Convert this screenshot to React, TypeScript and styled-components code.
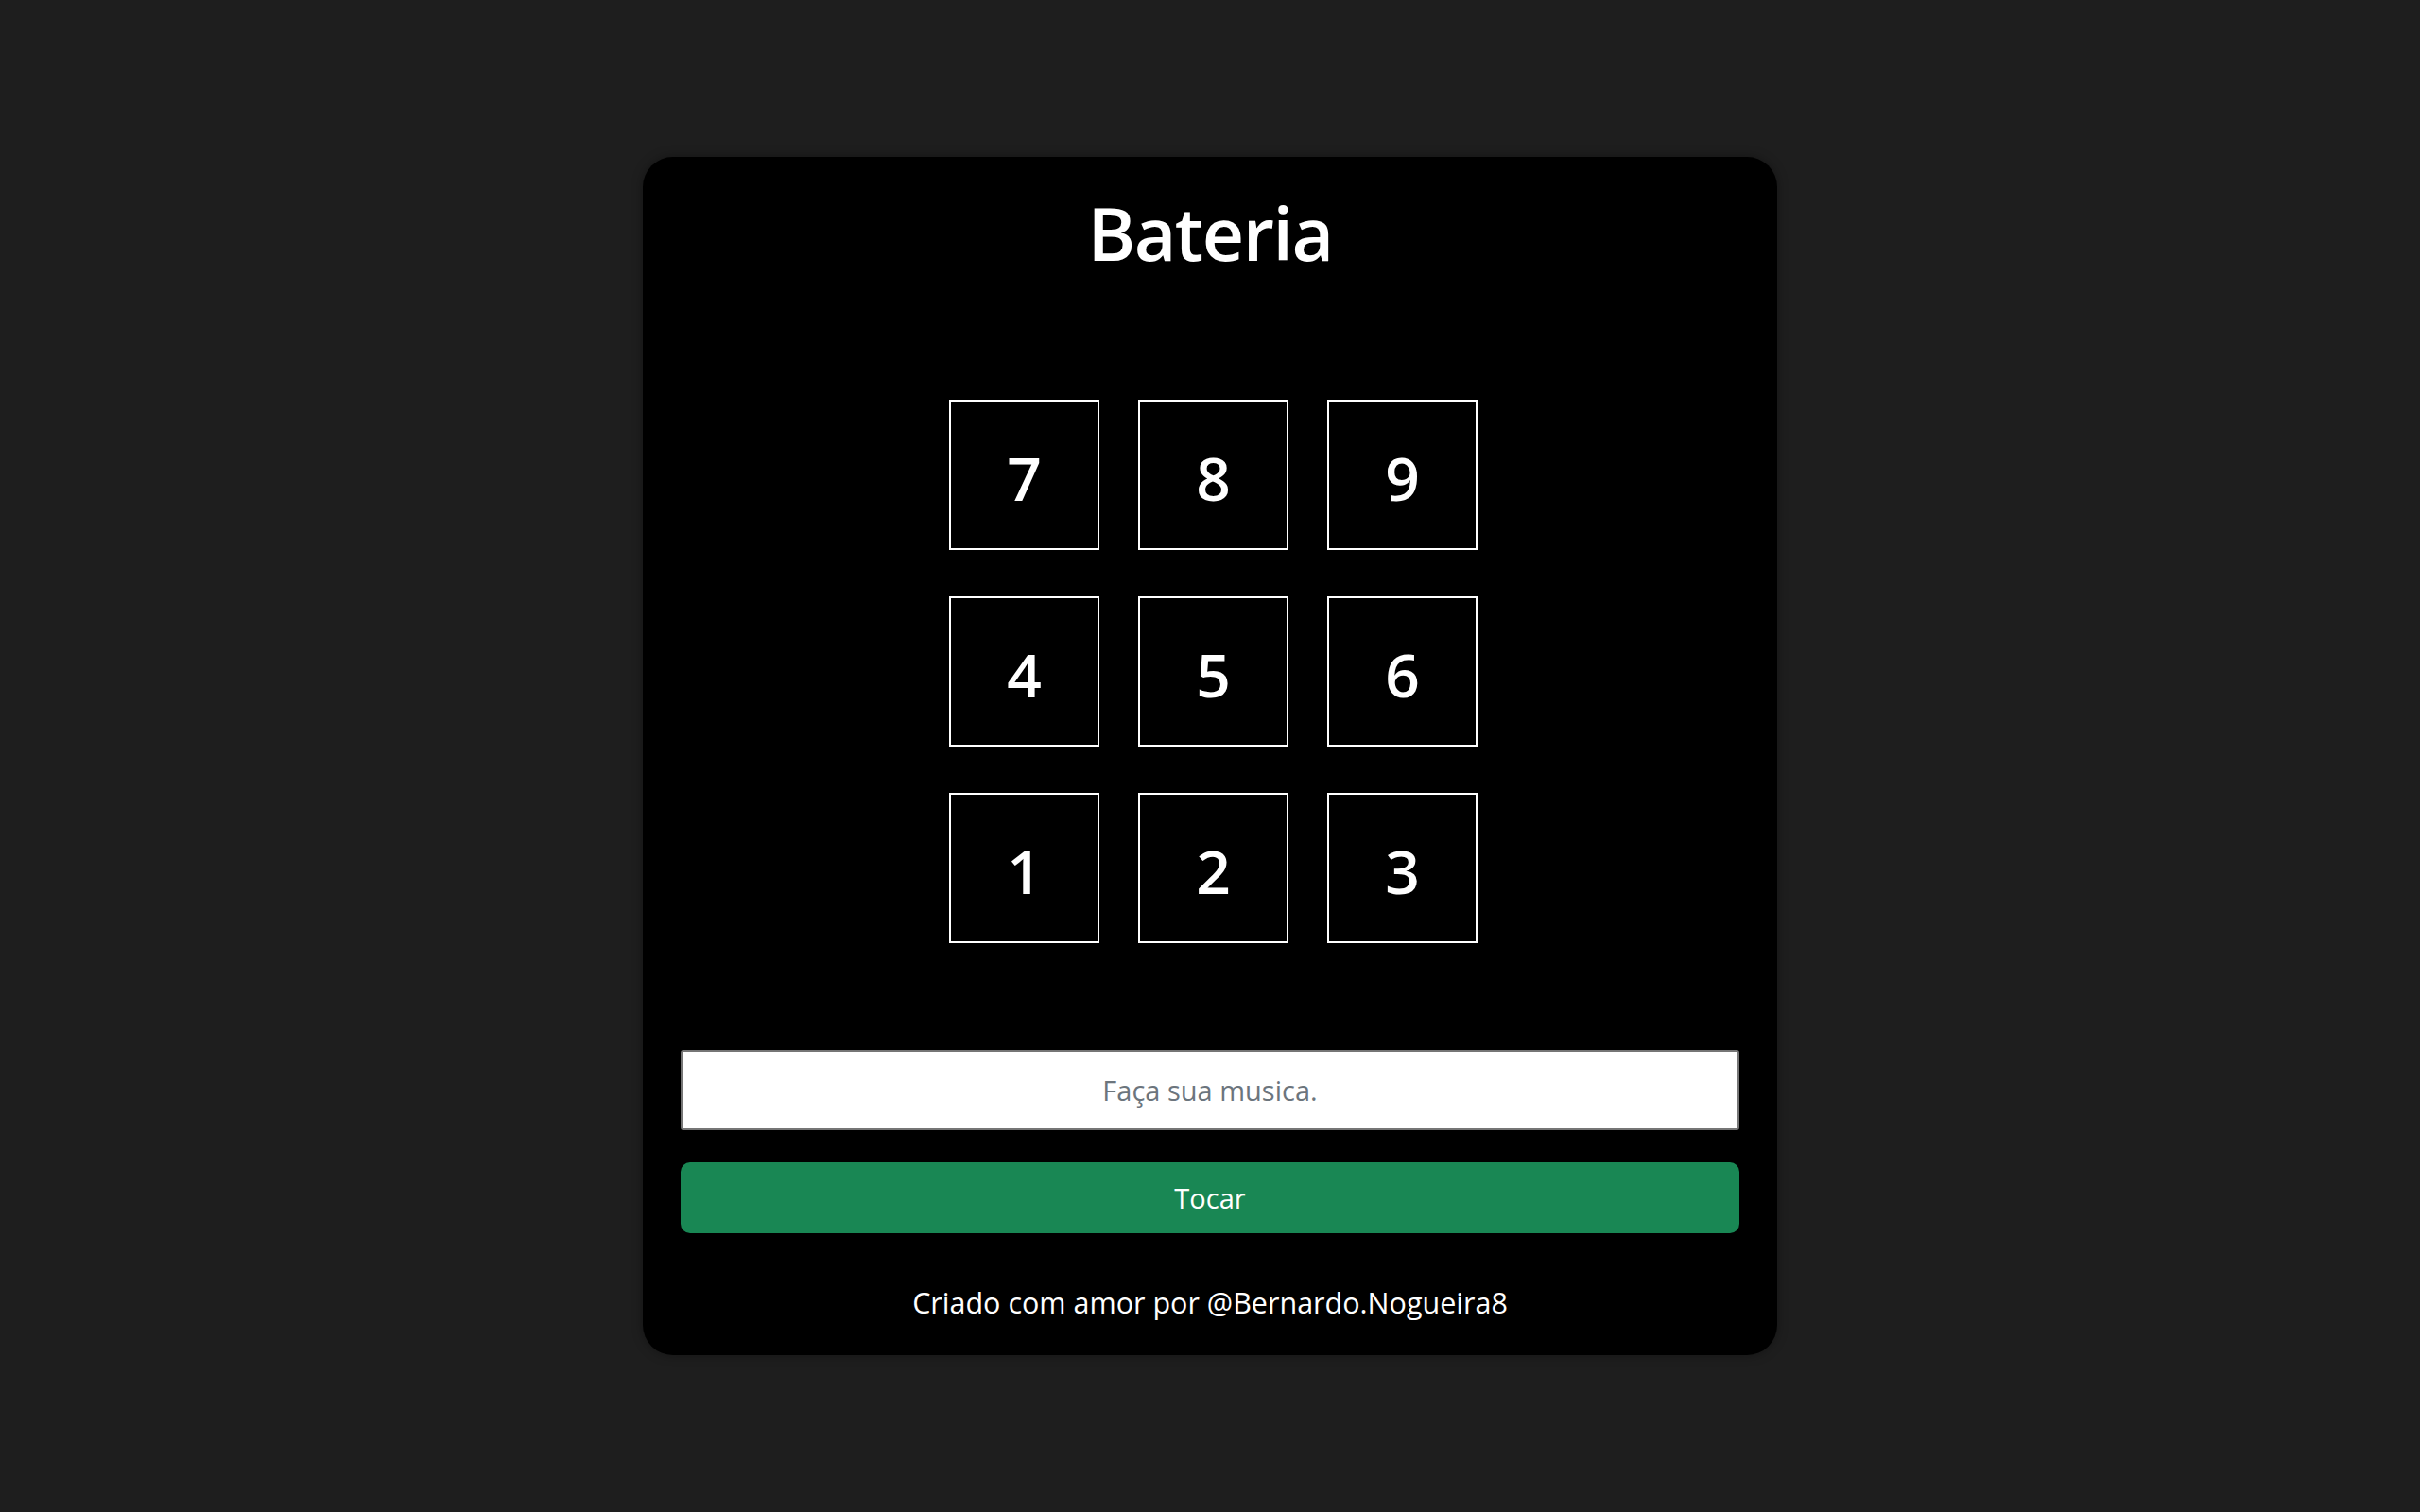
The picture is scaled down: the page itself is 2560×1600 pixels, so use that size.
import styled, { createGlobalStyle } from "styled-components";

const GlobalStyle = createGlobalStyle`
  * {
    box-sizing: border-box;
  }
  html, body {
    margin: 0;
    padding: 0;
    background-color: #1e1e1e;
    font-family: "Open Sans", "Noto Sans", sans-serif;
  }
`;

const Page = styled.div`
  min-height: 100vh;
  display: flex;
  justify-content: center;
  padding-top: 166px;
`;

const Card = styled.div`
  width: 1200px;
  height: 1268px;
  background-color: #000;
  border-radius: 32px;
  padding: 40px;
  display: flex;
  flex-direction: column;
  color: #fff;
  box-shadow: 0 0 12px rgba(0, 0, 0, 0.35);
`;

const Title = styled.h1`
  margin: 0;
  font-size: 77px;
  line-height: 82px;
  font-weight: 600;
  text-align: center;
  letter-spacing: -1.5px;
`;

const Pads = styled.div`
  margin-top: 135px;
  align-self: center;
  padding-left: 7px;
  display: grid;
  grid-template-columns: repeat(3, 159px);
  grid-auto-rows: 159px;
  column-gap: 41px;
  row-gap: 49px;
`;

const Pad = styled.button`
  background: #000;
  border: 2px solid #fff;
  color: #fff;
  font-family: inherit;
  font-size: 64px;
  font-weight: 600;
  display: flex;
  align-items: center;
  justify-content: center;
  padding: 5px 0 0;
  cursor: pointer;
`;

const SongInput = styled.input`
  margin-top: 113px;
  width: 100%;
  height: 87px;
  border: 2px solid #767676;
  border-radius: 3px;
  background: #fff;
  font-family: inherit;
  font-size: 29px;
  text-align: center;
  color: #222;
  outline: none;

  &::placeholder {
    color: #6c757d;
  }
`;

const PlayButton = styled.button`
  margin-top: 34px;
  width: 100%;
  height: 76px;
  border: none;
  border-radius: 10px;
  background-color: #198754;
  color: #fff;
  font-family: inherit;
  font-size: 29px;
  cursor: pointer;
`;

const Footer = styled.p`
  margin: 57px 0 0;
  font-size: 30.5px;
  line-height: 32px;
  text-align: center;
`;

const keys = ["7", "8", "9", "4", "5", "6", "1", "2", "3"];

export default function App() {
  return (
    <>
      <GlobalStyle />
      <Page>
        <Card>
          <Title>Bateria</Title>
          <Pads>
            {keys.map((k) => (
              <Pad key={k}>{k}</Pad>
            ))}
          </Pads>
          <SongInput placeholder="Faça sua musica." />
          <PlayButton>Tocar</PlayButton>
          <Footer>Criado com amor por @Bernardo.Nogueira8</Footer>
        </Card>
      </Page>
    </>
  );
}
